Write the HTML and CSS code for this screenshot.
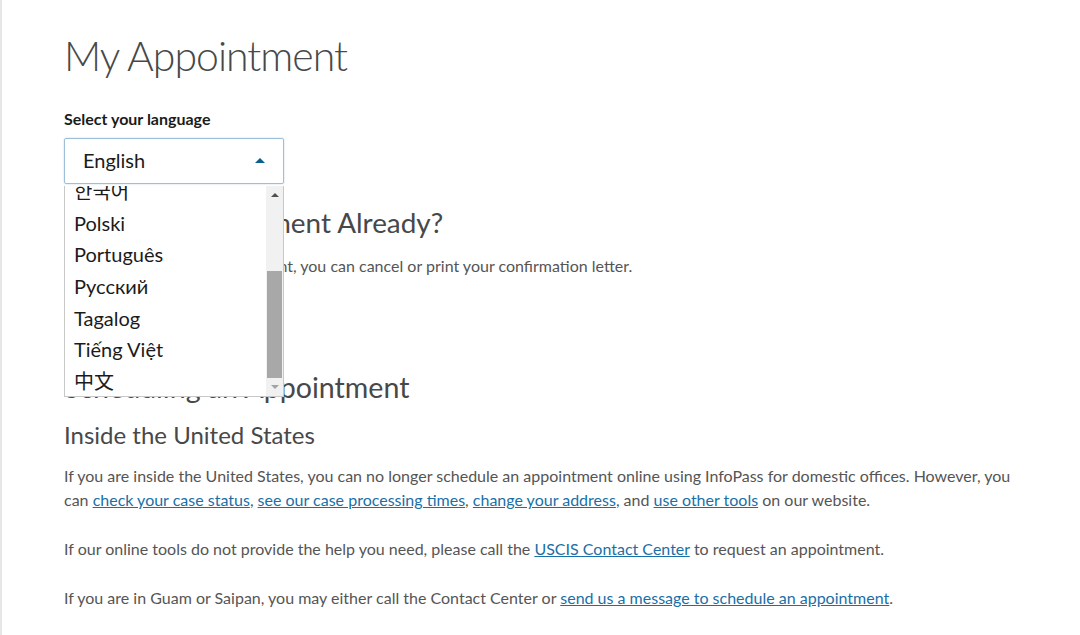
FILE: index.html
```html
<!DOCTYPE html>
<html lang="en">
<head>
    <meta charset="UTF-8">
    <meta name="viewport" content="width=device-width, initial-scale=1.0">
    <title>My Appointment</title>
    <link rel="stylesheet" href="styles.css">
</head>
<body>
    <div class="page">
        <h1>My Appointment</h1>

        <!-- Language picker, list is open -->
        <div class="lang">
            <label class="lang-label">Select your language</label>
            <div class="select-wrap">
                <div class="select">
                    <span>English</span>
                    <span class="caret"></span>
                </div>
                <div class="listbox">
                    <div class="options">
                        <div class="options-inner">
                            <div class="option">English</div>
                            <div class="option">Español</div>
                            <div class="option">Français</div>
                            <div class="option">Kreyòl Ayisyen</div>
                            <div class="option">한국어</div>
                            <div class="option">Polski</div>
                            <div class="option">Português</div>
                            <div class="option">Русский</div>
                            <div class="option">Tagalog</div>
                            <div class="option">Tiếng Việt</div>
                            <div class="option">中文</div>
                        </div>
                    </div>
                    <div class="scrollbar">
                        <span class="arrow up"></span>
                        <div class="track"><div class="thumb"></div></div>
                        <span class="arrow down"></span>
                    </div>
                </div>
            </div>
        </div>

        <h2 class="already">Have an Appointment Already?</h2>
        <p>If you scheduled an appointment, you can cancel or print your confirmation letter.</p>
        <a class="button" href="#">Find My Appointment</a>

        <h2>Scheduling an Appointment</h2>
        <h3>Inside the United States</h3>
        <p>If you are inside the United States, you can no longer schedule an appointment online using InfoPass for domestic offices. However, you can <a href="#">check your case status</a>, <a href="#">see our case processing times</a>, <a href="#">change your address</a>, and <a href="#">use other tools</a> on our website.</p>
        <p>If our online tools do not provide the help you need, please call the <a href="#">USCIS Contact Center</a> to request an appointment.</p>
        <p>If you are in Guam or Saipan, you may either call the Contact Center or <a href="#">send us a message to schedule an appointment</a>.</p>
    </div>
</body>
</html>
```

FILE: styles.css
```css
/* General page */
body {
    margin: 0;
    font-family: Lato, "Noto Sans CJK KR", "Noto Sans CJK SC", sans-serif;
    color: #555;
    background: #fff;
}
.page {
    border-left: 2px solid #e6e6e6;
    min-height: 635px;
    padding: 29px 64px 0 62px;
    box-sizing: border-box;
}
h1 {
    font-size: 41px;
    font-weight: 300;
    letter-spacing: -1px;
    color: #484848;
    margin: 0;
    line-height: 54px;
}
h2 {
    font-size: 28.6px;
    font-weight: 400;
    color: #484848;
    margin: 0 0 14px;
    line-height: 36px;
}
h2.already {
    font-size: 27.9px;
    margin-top: 20px;
}
h3 {
    font-size: 24px;
    font-weight: 400;
    color: #484848;
    margin: 0 0 13px;
    line-height: 32px;
}
p {
    font-size: 16px;
    line-height: 24px;
    margin: 0 0 25px;
}
a {
    color: #1a6fa6;
}

/* Language select */
.lang {
    margin-top: 26px;
}
.lang-label {
    display: block;
    font-size: 16px;
    line-height: 19px;
    font-weight: 700;
    color: #1b1b1b;
    margin-bottom: 10px;
}
.select-wrap {
    position: relative;
    width: 220px;
}
.select {
    height: 46px;
    box-sizing: border-box;
    border: 1px solid #9cc0d8;
    border-radius: 2px;
    box-shadow: 0 0 2px #bcd6e8;
    display: flex;
    align-items: center;
    justify-content: space-between;
    padding: 0 18px 3px 18px;
    font-size: 20px;
    color: #1b1b1b;
}
.caret {
    width: 0;
    height: 0;
    margin-top: 2px;
    border-left: 5px solid transparent;
    border-right: 5px solid transparent;
    border-bottom: 5px solid #0b5f8f;
}

/* Open dropdown list, sits on top of the page */
.listbox {
    position: absolute;
    top: 48px;
    left: 0;
    width: 220px;
    height: 211px;
    box-sizing: border-box;
    border: 1px solid #c8c8c8;
    border-top: none;
    background: #fff;
    display: flex;
    z-index: 2;
}
.options {
    flex: 1;
    overflow: hidden;
}
.options-inner {
    margin-top: -137px;
}
.option {
    font-size: 20px;
    line-height: 31.7px;
    padding-left: 9px;
    color: #1b1b1b;
}
.scrollbar {
    width: 17px;
    background: #f1f1f1;
    display: flex;
    flex-direction: column;
    align-items: center;
}
.arrow {
    width: 0;
    height: 0;
    border-left: 4px solid transparent;
    border-right: 4px solid transparent;
    margin: 7px 0;
}
.arrow.up {
    border-bottom: 4px solid #505050;
}
.arrow.down {
    border-top: 4px solid #a3a3a3;
}
.track {
    flex: 1;
    width: 100%;
    display: flex;
    flex-direction: column;
    justify-content: flex-end;
}
.thumb {
    height: 107px;
    margin: 0 1px;
    background: #a8a8a8;
}

/* Hidden under the open list */
.button {
    display: inline-block;
    margin: 0 0 23px;
    padding: 12px 20px;
    background: #0071bc;
    color: #fff;
    text-decoration: none;
    font-size: 16px;
    line-height: 19px;
}
```
